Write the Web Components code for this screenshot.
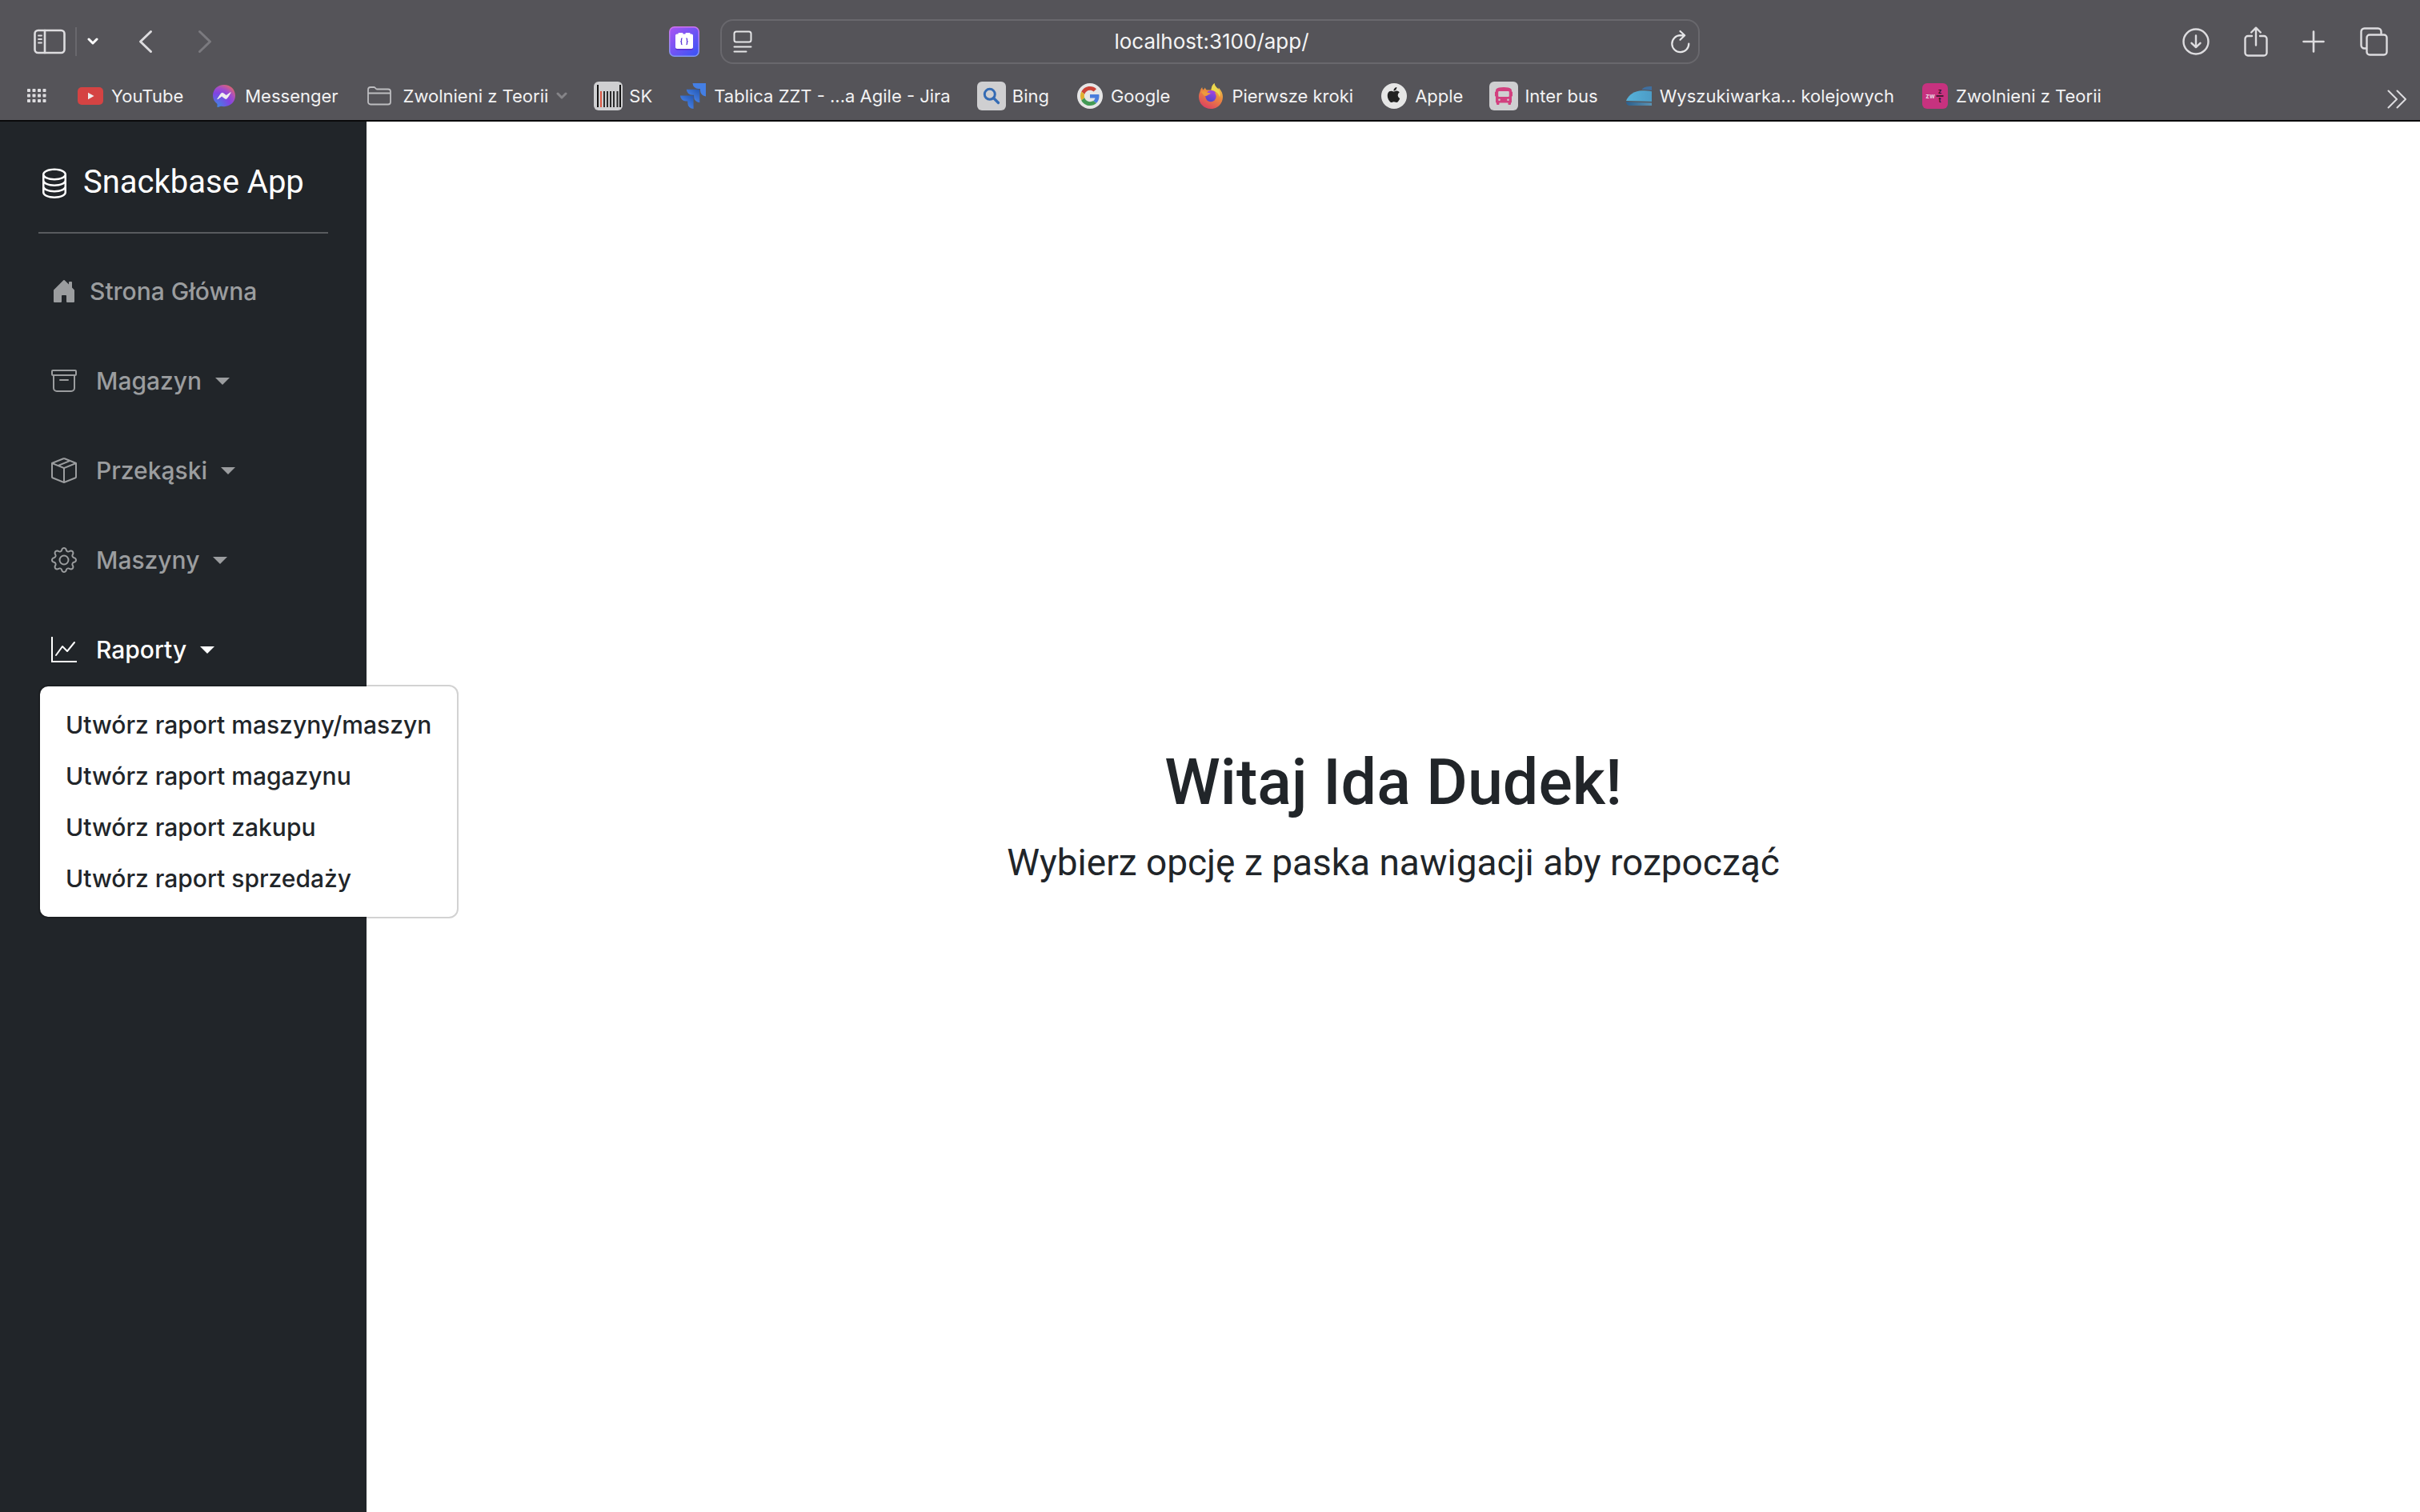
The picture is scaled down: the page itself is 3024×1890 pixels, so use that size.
<!DOCTYPE html>
<html lang="pl">
<head>
<meta charset="utf-8">
<title>Snackbase App</title>
<style>
  html, body { margin: 0; height: 100%; }
  body { font-family: Inter, "Liberation Sans", sans-serif; background: #fff; color: #212529; }
</style>
</head>
<body>
<browser-window>
  <browser-toolbar slot="chrome" url="localhost:3100/app/"></browser-toolbar>
  <bookmarks-bar slot="chrome">
    <bookmark-link icon="youtube">YouTube</bookmark-link>
    <bookmark-link icon="messenger">Messenger</bookmark-link>
    <bookmark-link icon="folder" folder>Zwolnieni z Teorii</bookmark-link>
    <bookmark-link icon="barcode">SK</bookmark-link>
    <bookmark-link icon="jira">Tablica ZZT - ...a Agile - Jira</bookmark-link>
    <bookmark-link icon="bing">Bing</bookmark-link>
    <bookmark-link icon="google">Google</bookmark-link>
    <bookmark-link icon="firefox">Pierwsze kroki</bookmark-link>
    <bookmark-link icon="apple">Apple</bookmark-link>
    <bookmark-link icon="bus">Inter bus</bookmark-link>
    <bookmark-link icon="train">Wyszukiwarka... kolejowych</bookmark-link>
    <bookmark-link icon="zwzt">Zwolnieni z Teorii</bookmark-link>
  </bookmarks-bar>
  <app-sidebar brand="Snackbase App">
    <nav-item icon="house">Strona Główna</nav-item>
    <nav-dropdown icon="archive" label="Magazyn"></nav-dropdown>
    <nav-dropdown icon="box" label="Przekąski"></nav-dropdown>
    <nav-dropdown icon="gear" label="Maszyny"></nav-dropdown>
    <nav-dropdown icon="graph" label="Raporty" open>
      <menu-entry>Utwórz raport maszyny/maszyn</menu-entry>
      <menu-entry>Utwórz raport magazynu</menu-entry>
      <menu-entry>Utwórz raport zakupu</menu-entry>
      <menu-entry>Utwórz raport sprzedaży</menu-entry>
    </nav-dropdown>
  </app-sidebar>
  <welcome-panel>
    <span slot="title">Witaj Ida Dudek!</span>
    <span slot="hint">Wybierz opcję z paska nawigacji aby rozpocząć</span>
  </welcome-panel>
</browser-window>

<script>
const stroke = (w, body) => `<g fill="none" stroke="currentColor" stroke-width="${w}" stroke-linecap="round" stroke-linejoin="round">${body}</g>`;

/* name: [width, height, viewBox, markup] */
const ICONS = {
  sidebar: [40, 32, '0 0 40 32', stroke(2.6, '<rect x="1.5" y="2" width="37" height="28" rx="4"/><path d="M14 2v28"/>') + stroke(1.8, '<path d="M6 8.500h4M6 13h4M6 17.500h4"/>')],
  down: [14, 10, '0 0 14 10', stroke(3, '<path d="M2 2l5 5 5-5"/>')],
  back: [18, 30, '0 0 18 30', stroke(3, '<path d="M15.500 2.500L2.500 15l13 12.500"/>')],
  forward: [18, 30, '0 0 18 30', stroke(3, '<path d="M2.500 2.500L15.500 15l-13 12.500"/>')],
  extension: [38, 38, '0 0 38 38', `<defs><linearGradient id="a" x1="0" y1="0" x2="1" y2="1"><stop offset="0" stop-color="#ab55f2"/><stop offset="1" stop-color="#3553f6"/></linearGradient><linearGradient id="b" x1="0" y1="0" x2="0" y2="1"><stop offset="0" stop-color="#cf72ee"/><stop offset="1" stop-color="#7f97f2"/></linearGradient></defs>
    <rect x=".75" y=".75" width="36.500" height="36.500" rx="6" fill="url(#a)" stroke="url(#b)" stroke-width="1.500"/>
    <rect x="8" y="12" width="22" height="17.500" rx="2" fill="#5a2fd0"/>
    <path d="M10 9.500h1.500V9c0-.6.400-1 1-1h4c.6 0 1 .4 1 1v.5h3V9c0-.6.400-1 1-1h4c.6 0 1 .4 1 1v.5H28c1.100 0 2 .9 2 2V26c0 1.100-.9 2-2 2H10c-1.100 0-2-.9-2-2V11.500c0-1.100.9-2 2-2z" fill="#fff"/>
    <path d="M16.500 15c-1.500 0-.8 2-1 3-.2.600-1 .8-1 .8s.8.200 1 .8c.2 1-.5 3 1 3M21.500 15c1.500 0 .8 2 1 3 .2.600 1 .8 1 .8s-.8.200-1 .8c-.2 1 .5 3-1 3" fill="none" stroke="#5b35d8" stroke-width="1.300"/>`],
  reader: [24, 28, '0 0 24 28', stroke(2, '<rect x="1.500" y="1.500" width="21" height="13" rx="2.500"/><path d="M1.500 20.500h21M1.500 26.500h15"/>')],
  reload: [24, 30, '0 0 24 30', stroke(2.2, '<path d="M22.300 17.500A10.500 10.500 0 1 1 11.500 7.200l5.500.1M11.500 2l5.700 5.300-5.700 5.500"/>')],
  download: [34, 34, '0 0 34 34', stroke(2.4, '<circle cx="17" cy="17" r="15.500"/><path d="M17 9.500v14.500M11.500 18.800l5.500 5.400 5.500-5.400"/>')],
  share: [30, 38, '0 0 30 38', stroke(2.4, '<path d="M10 12H5a3.500 3.500 0 0 0-3.500 3.500V33A3.500 3.500 0 0 0 5 36.500h20a3.500 3.500 0 0 0 3.500-3.500V15.500A3.500 3.500 0 0 0 25 12h-5M15 23.500V1.800M9.200 7.500L15 1.700l5.800 5.800"/>')],
  plus: [28, 28, '0 0 28 28', stroke(2.6, '<path d="M14 1.500v25M1.500 14h25"/>')],
  tabs: [36, 36, '0 0 36 36', stroke(2.4, '<path d="M9 26.500H6.500a4 4 0 0 1-4-4v-17a4 4 0 0 1 4-4h17a4 4 0 0 1 4 4V8"/><rect x="9.500" y="9.500" width="25" height="25" rx="3.500"/>')],
  more: [24, 24, '0 0 24 24', stroke(2, '<path d="M1.500 1.500L12 12 1.500 22.500M12.500 1.500L23 12 12.500 22.500"/>')],
  grid: [24, 18, '0 0 24 18', [0, 6.500, 13, 19.500].map(x => [0, 6.500, 13].map(y => `<rect x="${x}" y="${y}" width="4" height="4" rx=".8" fill="currentColor"/>`).join('')).join('')],
  youtube: [32, 32, '0 0 32 32', '<rect y="5" width="32" height="22" rx="5" fill="#d54343"/><path d="M13 11.800v8.400l7.500-4.200z" fill="#eee"/>'],
  messenger: [28, 28, '0 0 28 28', `<defs><radialGradient id="m" cx=".15" cy="1" r="1.150"><stop offset="0" stop-color="#3a8ce4"/><stop offset=".55" stop-color="#8043e2"/><stop offset=".75" stop-color="#a04ccb"/><stop offset="1" stop-color="#e3666b"/></radialGradient></defs>
    <path d="M14 0c8 0 14 5.800 14 13.600s-6 13.600-14 13.600c-1.400 0-2.800-.2-4-.5L5.500 28.300V24C2 21.500 0 17.900 0 13.600 0 5.800 6 0 14 0z" fill="url(#m)"/><path d="M5.800 17.800L10 11.300c.6-1 2-1.300 3-.6l3.200 2.400c.3.200.7.200 1 0l5-3.400-4.200 6.700c-.7 1-2 1.300-3 .6l-3.300-2.500c-.3-.2-.7-.2-1 0z" fill="#eee" stroke="#eee" stroke-linejoin="round"/>`],
  folder: [30, 24, '0 0 30 24', '<g color="#bdbdc0">' + stroke(1.8, '<path d="M1 19.500V4a3 3 0 0 1 3-3h4.500c1.500 0 2 2.500 3.500 2.500h14a3 3 0 0 1 3 3v13a3 3 0 0 1-3 3H4a3 3 0 0 1-3-3zM1 8.500h28"/>') + '</g>'],
  barcode: [36, 36, '0 0 36 36', '<rect width="36" height="36" rx="6" fill="#cfcfd1"/><path d="M5 4v28M33 4v28" stroke="#111" stroke-width="2"/><path d="M13 12v20M17 12v20M21 12v20M25 12v20M29.500 12v20" stroke="#2c2c2c" stroke-width="2"/><path d="M9 12v20" stroke="#dc5843" stroke-width="2"/>'],
  jira: [32, 32, '0 0 32 32', `<defs><linearGradient id="j" x1="1" y1="0" x2=".4" y2=".7"><stop offset="0" stop-color="#2456b0"/><stop offset="1" stop-color="#447fe4"/></linearGradient></defs>
    <path d="M15.500 0H32v16.500a7.300 7.300 0 0 1-7-7.200V7h-2.200a7.200 7.200 0 0 1-7.300-7z" fill="#447fe4"/><path d="M7.800 7.700H24.300v16.500a7.300 7.300 0 0 1-7.200-7.300v-2.200H15a7.200 7.200 0 0 1-7.200-7z" fill="url(#j)"/><path d="M0 15.500h16.600V32a7.300 7.300 0 0 1-7.300-7.200v-2.200H7.200A7.200 7.200 0 0 1 0 15.500z" fill="url(#j)"/>`],
  bing: [36, 36, '0 0 36 36', '<rect width="36" height="36" rx="6" fill="#cfcfd1"/><circle cx="15.800" cy="15.800" r="6.500" fill="none" stroke="#346bb4" stroke-width="3"/><path d="M20.500 20.500l6 6" stroke="#346bb4" stroke-width="3.200" stroke-linecap="round"/>'],
  google: [32, 32, '0 0 32 32', `<circle cx="16" cy="16" r="16" fill="#e6e6e6"/><svg x="4" y="4" width="24" height="24" viewBox="0 0 48 48"><path fill="#cc4438" d="M24 9.500c3.540 0 6.710 1.220 9.210 3.600l6.850-6.850C35.900 2.380 30.470 0 24 0 14.620 0 6.510 5.380 2.560 13.220l7.980 6.190C12.430 13.720 17.740 9.500 24 9.500z"/><path fill="#4a7ddc" d="M46.980 24.550c0-1.570-.15-3.090-.38-4.550H24v9.020h12.940c-.58 2.960-2.260 5.480-4.780 7.180l7.730 6c4.510-4.180 7.090-10.360 7.090-17.650z"/><path fill="#e0b030" d="M10.530 28.590c-.48-1.450-.76-2.990-.76-4.590s.27-3.140.76-4.590l-7.980-6.190C.92 16.460 0 20.120 0 24c0 3.880.92 7.540 2.560 10.780l7.970-6.190z"/><path fill="#439a55" d="M24 48c6.480 0 11.930-2.130 15.890-5.810l-7.730-6c-2.150 1.450-4.920 2.300-8.160 2.300-6.260 0-11.570-4.220-13.470-9.910l-7.980 6.190C6.510 42.620 14.620 48 24 48z"/></svg>`],
  firefox: [32, 32, '0 0 32 32', `<defs><linearGradient id="f" x1=".8" y1="0" x2=".3" y2="1"><stop offset="0" stop-color="#ecd84e"/><stop offset=".45" stop-color="#eb8a3e"/><stop offset="1" stop-color="#dc3f62"/></linearGradient><linearGradient id="p" x1=".7" y1="0" x2=".3" y2="1"><stop offset="0" stop-color="#a045dd"/><stop offset="1" stop-color="#4b46c8"/></linearGradient></defs>
    <path d="M2.500 10.500c.4-2.200 1.600-4.300 2.800-5.500 0 1.500.4 2.500 1 3.200 1-.6 1.800-1 2.500-2.700.6 1.300 1 2.500 2.200 3h5.500C16.800 4.500 18.500 1.500 20.500 0c.2 3.500 3 5.500 5 7.500.3-.7.200-1.300.1-2 3 3 5.400 7 5.400 11.500C31 25.500 24.500 32 16 32S1 25.300 1 17c0-2.500.6-4.700 1.500-6.500z" fill="url(#f)"/>
    <path d="M20.500 0c.2 3.500 3 5.500 5 7.500 2.500 3.500 2.500 7 1.500 10-1-5-4.500-7.500-10.500-9C16.800 4.500 18.500 1.500 20.500 0z" fill="#ecd84e"/>
    <circle cx="16" cy="16.500" r="6.700" fill="url(#p)"/><path d="M12 11c2-2.500 7.500-3 10.500 1.500-2-.6-3 .2-4.500 0 0 0-2.500 2.500-6 2z" fill="#9a45dc"/><path d="M3.500 10.500c3-1 6-.5 8 1 1.200.8 2.800.8 4.200.7-.8 1.800-2.700 1.700-3.700 2.800-1 1-2.500 1.300-4.500.5z" fill="#ee9a3d"/>`],
  apple: [32, 32, '0 0 32 32', '<circle cx="16" cy="16" r="16" fill="#e6e6e6"/><svg x="6" y="5" width="19" height="19" viewBox="0 0 16 16"><path fill="#222" d="M11.182.008C11.148-.03 9.923.023 8.857 1.180c-1.066 1.156-.902 2.482-.878 2.516s1.520.087 2.475-1.258.762-2.391.728-2.430m3.314 11.733c-.048-.096-2.325-1.234-2.113-3.422s1.675-2.789 1.698-2.854-.597-.79-1.254-1.157a3.700 3.700 0 0 0-1.563-.434c-.108-.003-.483-.095-1.254.116-.508.139-1.653.589-1.968.607-.316.018-1.256-.522-2.267-.665-.647-.125-1.333.131-1.824.328-.49.196-1.422.754-2.074 2.237-.652 1.482-.311 3.830-.067 4.560s.625 1.924 1.273 2.796c.576.984 1.340 1.667 1.659 1.899s1.219.386 1.843.067c.502-.308 1.408-.485 1.766-.472.357.013 1.061.154 1.782.539.571.197 1.111.115 1.652-.105.541-.221 1.324-1.059 2.238-2.758q.52-1.185.473-1.282"/></svg>'],
  bus: [36, 36, '0 0 36 36', '<rect width="36" height="36" rx="6" fill="#cfcfd1"/><path fill="#d2407f" fill-rule="evenodd" d="M18 7c4.500 0 8 .8 9.300 2.300.5.600.7 1.400.7 2.200v1h.2c.5 0 .8.400.8.800v4.500c0 .5-.3.800-.8.800H28v6.900c0 .5-.4 1-1 1v1.500c0 .8-.7 1-1.300 1h-1c-.7 0-1.200-.4-1.200-1v-1.500h-11V28c0 .6-.5 1-1.200 1h-1c-.6 0-1.300-.2-1.300-1v-1.500c-.6 0-1-.5-1-1v-6.900h-.2c-.5 0-.8-.3-.8-.8v-4.500c0-.4.300-.8.800-.8H8v-1c0-.8.200-1.600.7-2.200C10 7.800 13.500 7 18 7zm-5.500 5c-.8 0-1.300.5-1.300 1.300v4.400c0 .8.500 1.300 1.300 1.300h11c.8 0 1.300-.5 1.300-1.300v-4.400c0-.8-.5-1.300-1.300-1.300zm0 9.500a1.300 1.300 0 1 0 0 2.600 1.300 1.300 0 0 0 0-2.600zm11 0a1.300 1.300 0 1 0 0 2.600 1.300 1.300 0 0 0 0-2.600z"/>'],
  train: [32, 32, '0 0 32 32', `<defs><linearGradient id="t"><stop offset="0" stop-color="#56b2da"/><stop offset="1" stop-color="#4c9cc6"/></linearGradient><linearGradient id="u"><stop offset="0" stop-color="#2c5f8c"/><stop offset="1" stop-color="#5a93b4"/></linearGradient></defs>
    <path d="M19.500 8c2-2.800 5-4 12.500-4v5c-5-.8-8-1-12.500-1z" fill="#3f6f9f"/><path d="M0 22C3 14 11 9.500 20 9.200c5 0 8 .3 12 1V23z" fill="url(#t)"/><path d="M0 23.200l32 1.300V28H5c-3 0-5-2-5-4.800z" fill="url(#u)"/>`],
  zwzt: [32, 32, '0 0 32 32', '<rect width="32" height="32" rx="6" fill="#c7327f"/><g font-family="Inter, sans-serif" font-weight="700" text-anchor="middle"><text x="10" y="19" font-size="8" fill="#e9d5e0">zw</text><text x="22" y="13" font-size="8" fill="#2b1623">z</text><text x="22" y="24" font-size="8" fill="#2b1623">t</text></g><path d="M17.500 16h9" stroke="#2b1623" stroke-width="1.600"/>'],
  database: [40, 40, '0 0 16 16', '<path fill="currentColor" d="M4.318 2.687C5.234 2.271 6.536 2 8 2s2.766.27 3.682.687C12.644 3.125 13 3.627 13 4c0 .374-.356.875-1.318 1.313C10.766 5.729 9.464 6 8 6s-2.766-.27-3.682-.687C3.356 4.875 3 4.373 3 4c0-.374.356-.875 1.318-1.313ZM13 5.698V7c0 .374-.356.875-1.318 1.313C10.766 8.729 9.464 9 8 9s-2.766-.27-3.682-.687C3.356 7.875 3 7.373 3 7V5.698c.271.202.58.378.904.525C4.978 6.711 6.427 7 8 7s3.022-.289 4.096-.777A4.920 4.920 0 0 0 13 5.698ZM14 4c0-1.007-.875-1.755-1.904-2.223C11.022 1.289 9.573 1 8 1s-3.022.289-4.096.777C2.875 2.245 2 2.993 2 4v9c0 1.007.875 1.755 1.904 2.223C4.978 15.710 6.427 16 8 16s3.022-.289 4.096-.777C13.125 14.755 14 14.007 14 13V4Zm-1 4.698V10c0 .374-.356.875-1.318 1.313C10.766 11.729 9.464 12 8 12s-2.766-.27-3.682-.687C3.356 10.875 3 10.373 3 10V8.698c.271.202.58.378.904.525C4.978 9.710 6.427 10 8 10s3.022-.289 4.096-.777A4.920 4.920 0 0 0 13 8.698Zm0 3V13c0 .374-.356.875-1.318 1.313C10.766 14.729 9.464 15 8 15s-2.766-.27-3.682-.687C3.356 13.875 3 13.373 3 13v-1.302c.271.202.58.378.904.525C4.978 12.710 6.427 13 8 13s3.022-.289 4.096-.777c.324-.147.633-.323.904-.525Z"/>'],
  house: [32, 32, '0 0 16 16', '<path fill="currentColor" d="M6.500 14.500v-3.505c0-.245.25-.495.5-.495h2c.25 0 .5.25.5.5v3.500a.5.5 0 0 0 .5.5h4a.5.5 0 0 0 .5-.5v-7a.5.5 0 0 0-.146-.354L13 5.793V2.500a.5.5 0 0 0-.5-.5h-1a.5.5 0 0 0-.5.5v1.293L8.354 1.146a.5.5 0 0 0-.708 0l-6 6A.5.5 0 0 0 1.500 7.500v7a.5.5 0 0 0 .5.5h4a.5.5 0 0 0 .5-.5"/>'],
  archive: [32, 32, '0 0 16 16', '<path fill="currentColor" d="M0 2a1 1 0 0 1 1-1h14a1 1 0 0 1 1 1v2a1 1 0 0 1-1 1v7.500a2.500 2.500 0 0 1-2.500 2.500h-9A2.500 2.500 0 0 1 1 12.500V5a1 1 0 0 1-1-1zm2 3v7.500A1.500 1.500 0 0 0 3.500 14h9a1.500 1.500 0 0 0 1.500-1.500V5zm13-3H1v2h14zM5 7.500a.5.5 0 0 1 .5-.5h5a.5.5 0 0 1 0 1h-5a.5.5 0 0 1-.5-.5"/>'],
  box: [32, 32, '0 0 16 16', '<path fill="currentColor" d="M8.186 1.113a.5.5 0 0 0-.372 0L1.846 3.500l2.404.961L10.404 2zm3.564 1.426L5.596 5 8 5.961 14.154 3.500zm3.250 1.700-6.500 2.600v7.922l6.500-2.600V4.240zM7.500 14.762V6.838L1 4.239v7.923zM7.443.184a1.500 1.500 0 0 1 1.114 0l7.129 2.852A.5.5 0 0 1 16 3.500v8.662a1 1 0 0 1-.629.928l-7.185 2.874a.5.5 0 0 1-.372 0L.63 13.090a1 1 0 0 1-.63-.928V3.500a.5.5 0 0 1 .314-.464z"/>'],
  gear: [32, 32, '0 0 16 16', '<path fill="currentColor" d="M8 4.754a3.246 3.246 0 1 0 0 6.492 3.246 3.246 0 0 0 0-6.492M5.754 8a2.246 2.246 0 1 1 4.492 0 2.246 2.246 0 0 1-4.492 0"/><path fill="currentColor" d="M9.796 1.343c-.527-1.790-3.065-1.790-3.592 0l-.094.319a.873.873 0 0 1-1.255.52l-.292-.16c-1.640-.892-3.433.902-2.540 2.541l.159.292a.873.873 0 0 1-.52 1.255l-.319.094c-1.790.527-1.790 3.065 0 3.592l.319.094a.873.873 0 0 1 .52 1.255l-.16.292c-.892 1.640.901 3.434 2.541 2.540l.292-.159a.873.873 0 0 1 1.255.52l.094.319c.527 1.790 3.065 1.790 3.592 0l.094-.319a.873.873 0 0 1 1.255-.52l.292.16c1.640.893 3.434-.902 2.540-2.541l-.159-.292a.873.873 0 0 1 .52-1.255l.319-.094c1.790-.527 1.790-3.065 0-3.592l-.319-.094a.873.873 0 0 1-.52-1.255l.16-.292c.893-1.640-.902-3.433-2.541-2.540l-.292.159a.873.873 0 0 1-1.255-.52zm-2.633.283c.246-.835 1.428-.835 1.674 0l.094.319a1.873 1.873 0 0 0 2.693 1.115l.291-.16c.764-.415 1.600.42 1.184 1.185l-.159.292a1.873 1.873 0 0 0 1.116 2.692l.318.094c.835.246.835 1.428 0 1.674l-.319.094a1.873 1.873 0 0 0-1.115 2.693l.16.291c.415.764-.42 1.600-1.185 1.184l-.291-.159a1.873 1.873 0 0 0-2.693 1.116l-.094.318c-.246.835-1.428.835-1.674 0l-.094-.319a1.873 1.873 0 0 0-2.692-1.115l-.292.16c-.764.415-1.600-.42-1.184-1.185l.159-.291A1.873 1.873 0 0 0 1.945 8.930l-.319-.094c-.835-.246-.835-1.428 0-1.674l.319-.094A1.873 1.873 0 0 0 3.060 4.377l-.16-.292c-.415-.764.42-1.600 1.185-1.184l.292.159a1.873 1.873 0 0 0 2.692-1.115z"/>'],
  graph: [32, 32, '0 0 16 16', '<path fill="currentColor" d="M0 0h1v15h15v1H0zm14.817 3.113a.5.5 0 0 1 .07.704l-4.500 5.500a.5.5 0 0 1-.74.037L7.060 6.767l-3.656 5.027a.5.5 0 0 1-.808-.588l4-5.500a.5.5 0 0 1 .758-.06l2.609 2.610 4.150-5.073a.5.5 0 0 1 .704-.07"/>'],
  caret: [18, 9, '0 0 18 9', '<path fill="currentColor" d="M0 0h18L9 9z"/>']
};

class ShadowElement extends HTMLElement {
  connectedCallback() {
    if (!this.shadowRoot) this.attachShadow({ mode: 'open' }).innerHTML = this.render();
  }
}

const define = (name, render) => customElements.define(name, class extends ShadowElement {
  render() { return render(this); }
});

const buttonReset = 'button { display: flex; align-items: center; margin: 0; padding: 0; border: 0; background: none; color: inherit; font: inherit; cursor: pointer; }';

define('ui-icon', el => {
  const [w, h, box, body] = ICONS[el.getAttribute('name')];
  return `<style>:host { display: block; flex: none; } svg { display: block; }</style>
    <svg width="${w}" height="${h}" viewBox="${box}" aria-hidden="true">${body}</svg>`;
});

define('browser-window', () => `
  <style>
    :host { display: flex; flex-direction: column; min-height: 100vh; }
    header { background: #555459; border-bottom: 2px solid #0a0a0b; color: #dddcdf; }
    .page { display: flex; flex: 1; }
  </style>
  <header><slot name="chrome"></slot></header>
  <div class="page"><slot></slot></div>`);

define('browser-toolbar', el => `
  <style>
    :host { display: grid; grid-template-columns: 1fr minmax(400px, 1224px) 1fr; align-items: center; height: 104px; }
    ${buttonReset}
    .left, .right { display: flex; align-items: center; }
    .left { padding: 0 26px 0 42px; }
    .right { justify-content: flex-end; gap: 43px; padding-right: 40px; }
    .divider { width: 2px; height: 36px; margin: 0 13px 0 12px; background: #69686d; }
    .menu { color: #fff; margin-right: 50px; }
    .back { margin-right: 56px; }
    .forward { color: #7b7a7f; }
    .extension { margin-left: auto; }
  </style>
  <div class="left">
    <button aria-label="Pasek boczny"><ui-icon name="sidebar"></ui-icon></button>
    <span class="divider"></span>
    <button class="menu" aria-label="Grupy kart"><ui-icon name="down"></ui-icon></button>
    <button class="back" aria-label="Wstecz"><ui-icon name="back"></ui-icon></button>
    <button class="forward" aria-label="Dalej" disabled><ui-icon name="forward"></ui-icon></button>
    <button class="extension" aria-label="Rozszerzenie"><ui-icon name="extension"></ui-icon></button>
  </div>
  <address-bar url="${el.getAttribute('url')}"></address-bar>
  <div class="right">
    <button aria-label="Pobrane"><ui-icon name="download"></ui-icon></button>
    <button aria-label="Udostępnij"><ui-icon name="share"></ui-icon></button>
    <button aria-label="Nowa karta"><ui-icon name="plus"></ui-icon></button>
    <button aria-label="Przegląd kart"><ui-icon name="tabs"></ui-icon></button>
  </div>`);

define('address-bar', el => `
  <style>
    :host { display: flex; align-items: center; box-sizing: border-box; height: 56px; padding: 0 10px 0 14px; border: 2px solid #69686d; border-radius: 16px; color: #e6e6e8; }
    ${buttonReset}
    input { flex: 1; min-width: 0; padding: 0; border: 0; outline: 0; background: none; color: #f4f4f5; font: 400 26px/32px Inter, "Liberation Sans", sans-serif; text-align: center; }
  </style>
  <button aria-label="Ustawienia witryny"><ui-icon name="reader"></ui-icon></button>
  <input type="text" aria-label="Adres" value="${el.getAttribute('url')}">
  <button aria-label="Odśwież"><ui-icon name="reload"></ui-icon></button>`);

define('bookmarks-bar', () => `
  <style>
    :host { display: flex; align-items: center; gap: 33px; height: 46px; box-sizing: border-box; padding: 0 17px 14px 34px; }
    ${buttonReset}
    .all { margin-right: 4px; }
    .more { align-self: flex-end; margin-left: auto; }
  </style>
  <button class="all" aria-label="Ulubione"><ui-icon name="grid"></ui-icon></button>
  <slot></slot>
  <button class="more" aria-label="Więcej zakładek"><ui-icon name="more"></ui-icon></button>`);

define('bookmark-link', el => `
  <style>
    :host { display: block; flex: none; }
    a { display: flex; align-items: center; color: #f2f2f3; text-decoration: none; font-size: 22px; line-height: 32px; white-space: nowrap; }
    .slot { display: flex; justify-content: center; width: 36px; margin-right: ${el.hasAttribute('folder') ? 12 : 8}px; }
    .down { color: #858488; margin-left: 10px; }
  </style>
  <a href="#"><span class="slot"><ui-icon name="${el.getAttribute('icon')}"></ui-icon></span><slot></slot>${el.hasAttribute('folder') ? '<ui-icon class="down" name="down"></ui-icon>' : ''}</a>`);

define('app-sidebar', el => `
  <style>
    :host { display: block; flex: none; box-sizing: border-box; width: 458px; padding: 46px 48px; background: #212529; color: #fff; }
    .brand { display: flex; align-items: center; gap: 16px; color: #fff; font: 400 40px/60px Roboto, "Liberation Sans", sans-serif; text-decoration: none; }
    hr { height: 2px; margin: 32px 0; border: 0; background: #585b5e; }
    nav { display: flex; flex-direction: column; gap: 32px; }
  </style>
  <a class="brand" href="#"><ui-icon name="database"></ui-icon>${el.getAttribute('brand')}</a>
  <hr>
  <nav><slot></slot></nav>`);

define('nav-item', el => `
  <style>
    :host { display: block; }
    a { display: flex; align-items: center; gap: 16px; padding: 16px; color: #9b9d9f; text-decoration: none; font-size: 30px; line-height: 48px; font-weight: 450; white-space: nowrap; }
  </style>
  <a href="#"><ui-icon name="${el.getAttribute('icon')}"></ui-icon><slot></slot></a>`);

define('nav-dropdown', el => `
  <style>
    :host { display: block; position: relative; color: #9b9d9f; }
    :host([open]) { color: #fff; }
    ${buttonReset}
    button { padding: 16px; font-size: 30px; line-height: 48px; font-weight: 450; }
    .label { margin: 0 17px 0 24px; }
    .menu { display: none; position: absolute; top: 100%; left: 0; z-index: 1; margin-top: 4px; padding: 16px 0; border: 2px solid rgba(0, 0, 0, .175); border-radius: 12px; background: #fff; background-clip: padding-box; }
    :host([open]) .menu { display: block; }
  </style>
  <button aria-haspopup="true" aria-expanded="${el.hasAttribute('open')}"><ui-icon name="${el.getAttribute('icon')}"></ui-icon><span class="label">${el.getAttribute('label')}</span><ui-icon name="caret"></ui-icon></button>
  <div class="menu"><slot></slot></div>`);

define('menu-entry', () => `
  <style>
    :host { display: block; }
    a { display: block; padding: 8px 32px; color: #212529; text-decoration: none; font-size: 30px; line-height: 48px; font-weight: 450; white-space: nowrap; }
  </style>
  <a href="#"><slot></slot></a>`);

define('welcome-panel', () => `
  <style>
    :host { display: flex; flex: 1; flex-direction: column; align-items: center; justify-content: center; padding-top: 2px; text-align: center; font-family: Roboto, "Liberation Sans", sans-serif; }
    h1 { margin: 0 0 16px; font-size: 79px; line-height: 96px; font-weight: 500; }
    p { margin: 0; font-size: 46px; line-height: 72px; }
  </style>
  <h1><slot name="title"></slot></h1>
  <p><slot name="hint"></slot></p>`);
</script>
</body>
</html>
